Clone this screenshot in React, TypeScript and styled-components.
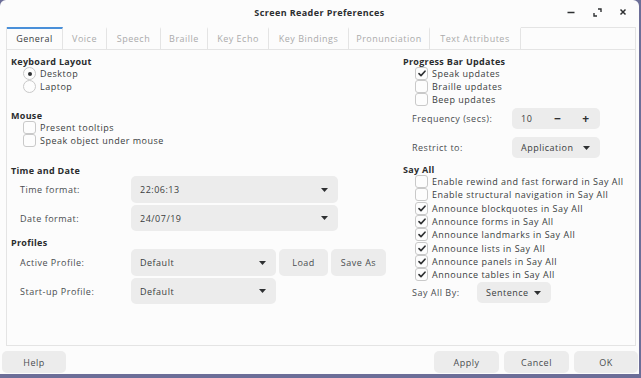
import React from 'react';
import styled, { createGlobalStyle } from 'styled-components';

const Global = createGlobalStyle`
  html, body {
    margin: 0;
    padding: 0;
    background: #6c6e98;
    font-family: "Open Sans", "DejaVu Sans", sans-serif;
    font-size: 9px;
    letter-spacing: 0.5px;
    color: #3a3d40;
  }
`

const Window = styled.div`
  width: 639px;
  height: 374px;
  background: #fcfcfc;
  border-radius: 6px 6px 0 0;
  display: flex;
  flex-direction: column;
  overflow: hidden;
`

const TitleBar = styled.div`
  height: 27px;
  display: grid;
  grid-template-columns: 1fr auto 1fr;
  align-items: center;
  padding-bottom: 3px;
  box-sizing: border-box;
`

const Title = styled.div`
  grid-column: 2;
  font-weight: 700;
  font-size: 9px;
  letter-spacing: 0.4px;
  color: #2c2e30;
`

const Controls = styled.div`
  grid-column: 3;
  display: flex;
  justify-content: flex-end;
  gap: 14px;
  padding-right: 10px;
`

const CtlButton = styled.div`
  width: 12px;
  height: 12px;
  display: flex;
  align-items: center;
  justify-content: center;
`

const Body = styled.div`
  padding: 0 3px 0 6px;
  display: flex;
  flex-direction: column;
`

const TabStrip = styled.div`
  display: flex;
  height: 22px;
  border: 1px solid #e4e4e4;
  border-bottom: none;
  box-sizing: border-box;
`

const Tab = styled.div<{ $active?: boolean; $w: number }>`
  width: ${p => p.$w}px;
  box-sizing: border-box;
  display: flex;
  align-items: center;
  justify-content: center;
  border-right: 1px solid #e4e4e4;
  border-top: 2px solid ${p => (p.$active ? '#4a90d9' : 'transparent')};
  margin-top: -1px;
  color: ${p => (p.$active ? '#3a3d40' : '#ababab')};
  font-size: 9px;
  padding-bottom: 1px;
  background: #fcfcfc;
`

const Panel = styled.div`
  height: 297px;
  border: 1px solid #e4e4e4;
  box-sizing: border-box;
  display: grid;
  grid-template-columns: 392px 1fr;
  padding: 6px 0 0 4px;
`

const Column = styled.div`
  display: flex;
  flex-direction: column;
`

const Heading = styled.div<{ $mt?: number }>`
  font-weight: 700;
  color: #2a2c2e;
  letter-spacing: 0.3px;
  line-height: 11px;
  height: 11px;
  margin-top: ${p => p.$mt || 0}px;
`

const OptionRow = styled.div<{ $h?: number }>`
  display: flex;
  align-items: center;
  gap: 4px;
  height: ${p => p.$h || 13}px;
  padding-left: 12px;
  white-space: nowrap;
`

const Box = styled.div`
  width: 11px;
  height: 11px;
  border: 1px solid #c9c9c9;
  border-radius: 3px;
  background: #fdfdfd;
  display: flex;
  align-items: center;
  justify-content: center;
  flex-shrink: 0;
`

const Radio = styled(Box)`
  border-radius: 50%;
`

const Dot = styled.div`
  width: 4px;
  height: 4px;
  border-radius: 50%;
  background: #2e3032;
`

const FieldRow = styled.div<{ $h: number; $mt?: number; $labelW: number }>`
  display: grid;
  grid-template-columns: ${p => p.$labelW}px auto auto auto;
  justify-content: start;
  align-items: center;
  column-gap: 3px;
  height: ${p => p.$h}px;
  margin-top: ${p => p.$mt || 0}px;
  padding-left: 9px;
`

const FieldLabel = styled.div`
  color: #4a4d50;
`

const Combo = styled.div<{ $w: number; $h: number }>`
  width: ${p => p.$w}px;
  height: ${p => p.$h}px;
  box-sizing: border-box;
  background: #ececec;
  border-radius: 5px;
  display: flex;
  align-items: center;
  justify-content: space-between;
  padding: 0 10px 0 9px;
  color: #3a3d40;
`

const Button = styled.div<{ $w: number; $h?: number }>`
  width: ${p => p.$w}px;
  height: ${p => p.$h || 26}px;
  box-sizing: border-box;
  background: #ececec;
  border-radius: 5px;
  display: flex;
  align-items: center;
  justify-content: center;
  color: #4a4d50;
`

const SpinValue = styled.span`
  flex: 1;
`

const SpinBtn = styled.span`
  width: 28px;
  display: flex;
  justify-content: center;
  font-weight: 700;
  font-size: 12px;
  color: #2e3032;
`

const Footer = styled.div`
  display: flex;
  padding: 5px 1px 1px 2px;
  gap: 5px;
`

const Spacer = styled.div`
  flex: 1;
`

const Arrow = () => (
  <svg width="7" height="4" viewBox="0 0 7 4"><path d="M0 0h7L3.5 4z" fill="#2e3032" /></svg>
)

const Check = () => (
  <svg width="8" height="7" viewBox="0 0 8 7">
    <path d="M1 3.6l2 2L7 1.2" fill="none" stroke="#2e3032" strokeWidth="1.6" strokeLinecap="round" strokeLinejoin="round" />
  </svg>
)

const CheckOption = ({ label, checked, h }: { label: string; checked?: boolean; h?: number }) => (
  <OptionRow $h={h}>
    <Box>{checked && <Check />}</Box>
    <span>{label}</span>
  </OptionRow>
)

const RadioOption = ({ label, checked }: { label: string; checked?: boolean }) => (
  <OptionRow>
    <Radio>{checked && <Dot />}</Radio>
    <span>{label}</span>
  </OptionRow>
)

const tabs: [string, number][] = [
  ['General', 55], ['Voice', 44], ['Speech', 54], ['Braille', 47], ['Key Echo', 61],
  ['Key Bindings', 80], ['Pronunciation', 81], ['Text Attributes', 91],
]

const sayAll: [string, boolean][] = [
  ['Enable rewind and fast forward in Say All', false],
  ['Enable structural navigation in Say All', false],
  ['Announce blockquotes in Say All', true],
  ['Announce forms in Say All', true],
  ['Announce landmarks in Say All', true],
  ['Announce lists in Say All', true],
  ['Announce panels in Say All', true],
  ['Announce tables in Say All', true],
]

export default function App() {
  return (
    <Window>
      <Global />
      <TitleBar>
        <Title>Screen Reader Preferences</Title>
        <Controls>
          <CtlButton>
            <svg width="8" height="8" viewBox="0 0 8 8"><path d="M0.5 4.5h7" stroke="#2e3032" strokeWidth="1.5" /></svg>
          </CtlButton>
          <CtlButton>
            <svg width="9" height="9" viewBox="0 0 9 9">
              <path d="M5 1h3v3M1 5v3h3" fill="none" stroke="#2e3032" strokeWidth="1.4" />
            </svg>
          </CtlButton>
          <CtlButton>
            <svg width="8" height="8" viewBox="0 0 8 8"><path d="M1.5 1.5l5 5M6.5 1.5l-5 5" stroke="#2e3032" strokeWidth="1.5" /></svg>
          </CtlButton>
        </Controls>
      </TitleBar>
      <Body>
        <TabStrip>
          {tabs.map(([t, w], i) => (
            <Tab key={t} $w={w + (i === 0 ? 1 : 0)} $active={i === 0}>{t}</Tab>
          ))}
        </TabStrip>
        <Panel>
          <Column>
            <Heading>Keyboard Layout</Heading>
            <RadioOption label="Desktop" checked />
            <RadioOption label="Laptop" />
            <Heading $mt={17}>Mouse</Heading>
            <CheckOption label="Present tooltips" />
            <CheckOption label="Speak object under mouse" />
            <Heading $mt={18}>Time and Date</Heading>
            <FieldRow $labelW={108} $h={27}>
              <FieldLabel>Time format:</FieldLabel>
              <Combo $w={207} $h={27}><span>22:06:13</span><Arrow /></Combo>
            </FieldRow>
            <FieldRow $labelW={108} $h={26} $mt={2}>
              <FieldLabel>Date format:</FieldLabel>
              <Combo $w={207} $h={26}><span>24/07/19</span><Arrow /></Combo>
            </FieldRow>
            <Heading $mt={6}>Profiles</Heading>
            <FieldRow $labelW={108} $h={27} $mt={1}>
              <FieldLabel>Active Profile:</FieldLabel>
              <Combo $w={145} $h={27}><span>Default</span><Arrow /></Combo>
              <Button $w={49} $h={27}>Load</Button>
              <Button $w={55} $h={27}>Save As</Button>
            </FieldRow>
            <FieldRow $labelW={108} $h={26} $mt={2}>
              <FieldLabel>Start-up Profile:</FieldLabel>
              <Combo $w={145} $h={26}><span>Default</span><Arrow /></Combo>
            </FieldRow>
          </Column>
          <Column>
            <Heading>Progress Bar Updates</Heading>
            <CheckOption label="Speak updates" checked />
            <CheckOption label="Braille updates" />
            <CheckOption label="Beep updates" />
            <FieldRow $labelW={97} $h={21} $mt={2}>
              <FieldLabel>Frequency (secs):</FieldLabel>
              <Combo $w={88} $h={21} style={{ paddingRight: 0 }}>
                <SpinValue>10</SpinValue>
                <SpinBtn>−</SpinBtn>
                <SpinBtn>+</SpinBtn>
              </Combo>
            </FieldRow>
            <FieldRow $labelW={97} $h={21} $mt={8}>
              <FieldLabel>Restrict to:</FieldLabel>
              <Combo $w={88} $h={21}><span>Application</span><Arrow /></Combo>
            </FieldRow>
            <Heading $mt={6}>Say All</Heading>
            {sayAll.map(([l, c]) => <CheckOption key={l} label={l} checked={c} h={13.3} />)}
            <FieldRow $labelW={62} $h={21} $mt={1}>
              <FieldLabel>Say All By:</FieldLabel>
              <Combo $w={74} $h={21}><span>Sentence</span><Arrow /></Combo>
            </FieldRow>
          </Column>
        </Panel>
      </Body>
      <Footer>
        <Button $w={64} $h={22}>Help</Button>
        <Spacer />
        <Button $w={65} $h={22}>Apply</Button>
        <Button $w={65} $h={22}>Cancel</Button>
        <Button $w={64} $h={22}>OK</Button>
      </Footer>
    </Window>
  );
}
